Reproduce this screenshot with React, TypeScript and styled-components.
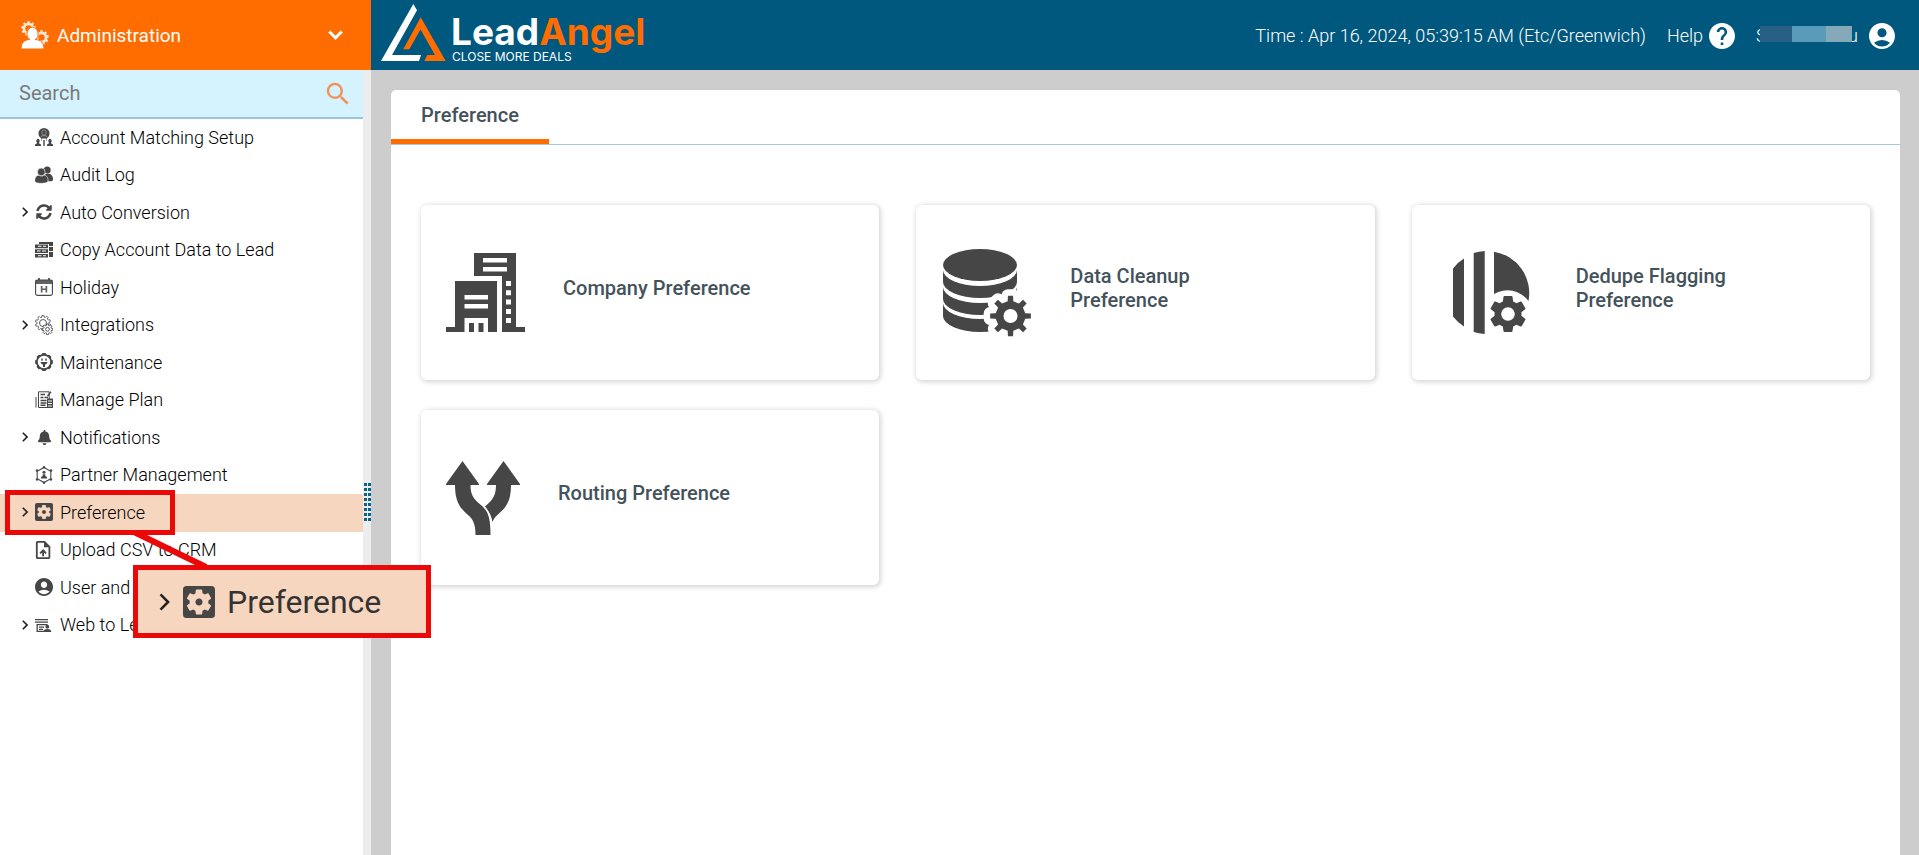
import React from "react";
import styled, { createGlobalStyle } from "styled-components";
import { FaBell, FaSyncAlt } from "react-icons/fa";
import {
  MdAccountCircle,
  MdHelp,
  MdOutlineUploadFile,
  MdSearch,
  MdSettings,
  MdSettingsApplications,
} from "react-icons/md";

const color = {
  orange: "#ff6c00",
  blue: "#00587e",
  peach: "#f6d6bf",
  red: "#ea0808",
  ink: "#464646",
  label: "#44525b",
};

const GlobalStyle = createGlobalStyle`
  *, *::before, *::after { box-sizing: border-box; }
  body { margin: 0; background: #cdcdcd; font-family: Roboto, "Liberation Sans", sans-serif; }
  a { color: inherit; text-decoration: none; }
  ul { margin: 0; padding: 0; list-style: none; }
  svg { display: block; flex: none; }
`;

const Page = styled.div`
  position: relative;
  display: grid;
  grid-template-columns: 371px 1fr;
  grid-template-rows: 70px 1fr;
  min-height: 100vh;
`;

/* Top bar */

const ModuleButton = styled.button`
  display: flex;
  align-items: center;
  gap: 8px;
  padding: 0 28px 0 21px;
  border: 0;
  background: ${color.orange};
  color: #fff;
  font: 400 19px Roboto, sans-serif;
`;

const ModuleName = styled.span`
  flex: 1;
  text-align: left;
`;

const TopBar = styled.header`
  display: flex;
  align-items: center;
  justify-content: space-between;
  padding: 0 20px 0 9px;
  background: ${color.blue};
  color: #fff;
  font-size: 18px;
`;

const Logo = styled.a`
  display: flex;
  align-items: center;
  gap: 5px;
  font-family: Inter, sans-serif;
`;

const LogoText = styled.span`
  display: grid;
  padding-top: 8px;
`;

const Brand = styled.span`
  font-size: 37px;
  font-weight: 700;
  line-height: 36px;
`;

const BrandAccent = styled.span`
  color: ${color.orange};
`;

const Tagline = styled.span`
  padding-left: 1px;
  font-size: 12px;
  line-height: 14px;
`;

const TopTools = styled.div`
  display: flex;
  align-items: center;
  gap: 21px;
  padding-top: 1px;
  font-weight: 300;
`;

const HelpLink = styled.a`
  display: flex;
  align-items: center;
  gap: 6px;
`;

const UserButton = styled.button`
  display: flex;
  align-items: center;
  gap: 11px;
  padding: 0 4px 0 0;
  border: 0;
  background: none;
  color: inherit;
  font: inherit;
`;

const UserName = styled.span`
  position: relative;
  display: flex;
  justify-content: space-between;
  width: 102px;
`;

const Redaction = styled.span`
  position: absolute;
  inset: 1px 6px auto 4px;
  display: grid;
  grid-template-columns: 32fr 33fr 26fr;
  height: 16px;
`;

const RedactionTile = styled.span<{ $tone: string }>`
  background: ${(p) => p.$tone};
`;

/* Sidebar */

const Sidebar = styled.aside`
  display: grid;
  grid-template-columns: 1fr 8px;
  background: #fff;
`;

const SearchBox = styled.label`
  display: flex;
  align-items: center;
  height: 49px;
  padding: 0 10px 0 19px;
  border-bottom: 2px solid #9bc6d8;
  background: #d5f3fe;
  color: #f3935a;
`;

const SearchInput = styled.input`
  flex: 1;
  min-width: 0;
  padding: 0 0 2px;
  border: 0;
  outline: 0;
  background: none;
  font: 400 20px Roboto, sans-serif;
  color: #333;
  &::placeholder {
    color: #7a7a7a;
    opacity: 1;
  }
`;

const Menu = styled.ul`
  display: grid;
  grid-auto-rows: 1fr;
  height: 525px;
`;

const MenuItem = styled.li<{ $active: boolean }>`
  background: ${(p) => (p.$active ? color.peach : "transparent")};
`;

const MenuLink = styled.a`
  display: grid;
  grid-template-columns: 13px 18px 1fr;
  align-items: center;
  height: 100%;
  padding: 0 0 1px 22px;
  color: #000;
  font-size: 18px;
  font-weight: 300;
`;

const MenuIcon = styled.span`
  display: grid;
  place-items: center;
  color: ${color.ink};
`;

const MenuText = styled.span`
  padding-left: 7px;
  white-space: nowrap;
`;

const Splitter = styled.div`
  display: grid;
  justify-content: center;
  padding-top: 413px;
  background: #ededed;
`;

const Grip = styled.div`
  display: grid;
  grid-template-columns: 3px 3px;
  grid-auto-rows: 3px;
  gap: 2px 1px;
  align-content: start;
`;

const GripDot = styled.span`
  background: #0a6489;
`;

/* Main area */

const Main = styled.main`
  display: flex;
  padding: 20px 19px 0 20px;
  background: #cdcdcd;
`;

const Panel = styled.section`
  flex: 1;
  border-radius: 5px 5px 0 0;
  background: #fff;
`;

const Tabs = styled.div`
  display: flex;
  border-bottom: 1px solid #a8c6d3;
`;

const Tab = styled.button`
  width: 158px;
  height: 54px;
  padding: 1px 0 0;
  border: 0;
  border-bottom: 5px solid ${color.orange};
  background: none;
  color: ${color.label};
  font: 500 20px Roboto, sans-serif;
`;

const Cards = styled.div`
  display: grid;
  grid-template-columns: repeat(3, 1fr);
  gap: 30px 37px;
  padding: 60px 30px;
`;

const Card = styled.a`
  display: flex;
  align-items: center;
  gap: 38px;
  height: 175px;
  padding: 0 25px;
  border-radius: 6px;
  box-shadow: 1px 1px 5px 1px rgba(0, 0, 0, 0.17);
  color: ${color.ink};
`;

const CardLabel = styled.span`
  max-width: 200px;
  padding-bottom: 9px;
  color: ${color.label};
  font-size: 20px;
  font-weight: 500;
  line-height: 24px;
`;

/* Annotation layer */

const Highlight = styled.div`
  position: absolute;
  left: 5px;
  top: 490px;
  width: 170px;
  height: 45px;
  border: 5px solid ${color.red};
`;

const Pointer = styled.svg`
  position: absolute;
  left: 130px;
  top: 530px;
`;

const Callout = styled.div`
  position: absolute;
  left: 133px;
  top: 565px;
  display: flex;
  align-items: center;
  width: 298px;
  height: 73px;
  padding-left: 21px;
  border: 5px solid ${color.red};
  background: ${color.peach};
  color: ${color.ink};
  font-size: 32px;
`;

const CalloutText = styled.span`
  padding-left: 12px;
  color: #333;
`;

const CalloutIcon = styled.span`
  padding-left: 13px;
`;

/* Drawings */

function gearPath(cx: number, cy: number, teeth: number, outer: number, inner: number, tip = 0.2, root = 0.3) {
  const step = (Math.PI * 2) / teeth;
  const points: string[] = [];
  for (let i = 0; i < teeth; i++) {
    const mid = i * step - Math.PI / 2;
    const corners: [number, number][] = [
      [-root, inner],
      [-tip, outer],
      [tip, outer],
      [root, inner],
    ];
    corners.forEach(([f, r]) => {
      const a = mid + f * step;
      points.push(`${(cx + r * Math.cos(a)).toFixed(2)} ${(cy + r * Math.sin(a)).toFixed(2)}`);
    });
  }
  return `M${points.join("L")}Z`;
}

const hole = (cx: number, cy: number, r: number) =>
  `M${cx - r} ${cy}a${r} ${r} 0 1 0 ${2 * r} 0a${r} ${r} 0 1 0 ${-2 * r} 0Z`;

const Small = ({ children, size = 18 }: { children: React.ReactNode; size?: number }) => (
  <svg width={size} height={size} viewBox="0 0 18 18" fill="currentColor" aria-hidden="true">
    {children}
  </svg>
);

const Chevron = ({ width = 6, height = 10, stroke = 1.6 }) => (
  <svg width={width} height={height} viewBox="0 0 6 10" fill="none" stroke="#222" strokeWidth={stroke} aria-hidden="true">
    <path d="M.8 .8L5 5 .8 9.200" />
  </svg>
);

const AdminIcon = () => (
  <svg width="28" height="28" viewBox="0 0 28 28" fill="#fff" aria-hidden="true">
    <path
      fillRule="evenodd"
      opacity=".85"
      d={gearPath(7.5, 7.5, 9, 7.4, 5.8, 0.22, 0.3) + hole(7.5, 7.5, 3.2)}
    />
    <path
      fillRule="evenodd"
      opacity=".85"
      d={gearPath(20.5, 16.5, 9, 7.4, 5.8, 0.22, 0.3) + hole(20.5, 16.5, 3.2)}
    />
    <g stroke={color.orange} strokeWidth="1">
      <path d="M0 28c0-6.500 3.500-9 8-9.500h7c4.500.5 8 3 8 9.500Z" />
      <ellipse cx="11.5" cy="13" rx="5.6" ry="6.800" />
    </g>
    <path d="M9 17h5v4H9z" />
  </svg>
);

const MatchIcon = () => (
  <Small>
    <circle cx="9" cy="5.500" r="5.500" />
    <path d="M6 9.500h6V13H6z" />
    <path d="M6.500 10.500h5V18h-5z" fill="#fff" />
    <path d="M8.300 12h1.400v6H8.300zM0 18v-1.500l1.800-1v-1.200a1.700 2 0 1 1 2.400 0v1.200l1.800 1V18zM12 18v-1.500l1.800-1v-1.200a1.700 2 0 1 1 2.400 0v1.200l1.800 1V18z" />
    <path d="M7 3.500c0-2 4-2 4 0v2c0 2-4 2-4 0zM5.500 9.500c.6-1.500 1.800-1.800 3.500-1.800s2.900.3 3.500 1.800" fill="none" stroke="#aaa" strokeWidth=".8" />
  </Small>
);

const PeopleIcon = () => (
  <Small>
    <circle cx="12.200" cy="4" r="3.500" />
    <path d="M9 15V9.500c1-1.200 2-1.700 4-1.700 3 0 5 1.700 5 6 0 1-1.500 1.500-4 1.500z" />
    <g stroke="#fff" strokeWidth=".6">
      <circle cx="6.300" cy="6" r="3.900" />
      <path d="M-.3 14.800c0-4 2.300-5.600 4.300-5.600 1.500 1.200 3.300 1.200 4.800 0 2.200 0 4.300 1.600 4.300 5.600 0 1.700-3 2.500-6.700 2.500S-.3 16.500-.3 14.800z" />
    </g>
  </Small>
);

const ServerIcon = () => (
  <Small>
    <path d="M4 1h14v15h-4V3H4zM0 3.500h13v3.700H0zM0 8.200h13v3.700H0zM0 12.900h13v3.700H0z" />
    <path d="M3 5.300h3.500M8 5.300h3M2 10h3.500M7 10h4M3 14.800h3.500M8 14.800h3M14 5.500h4M14 10.500h4" stroke="#fff" strokeWidth="1.100" />
  </Small>
);

const HolidayIcon = () => (
  <Small>
    <rect x=".6" y="2" width="16.800" height="15.400" rx="1.800" fill="none" stroke="currentColor" strokeWidth="1.100" />
    <path d="M.6 2h16.800v4H.6zM3 0h2v3H3zM13 0h2v3h-2zM5.800 8h1.700v2.400h3V8h1.700v6.500h-1.700v-2.600h-3v2.600H5.800z" opacity=".85" />
  </Small>
);

const IntegrationsIcon = () => (
  <svg width="18" height="20" viewBox="0 0 18 20" fill="none" stroke="currentColor" strokeWidth=".9" aria-hidden="true">
    <path d={gearPath(8, 8, 10, 7.6, 6, 0.22, 0.3)} strokeDasharray="3 .5" />
    <circle cx="8" cy="8" r="3.500" />
    <path d={gearPath(12.5, 14.3, 8, 5.4, 4.1, 0.22, 0.3)} fill="#fff" />
    <circle cx="12.500" cy="14.300" r="1.900" />
  </svg>
);

const MaintenanceIcon = () => (
  <Small>
    <path fillRule="evenodd" d={gearPath(9, 9, 8, 9, 8, 0.2, 0.38) + hole(9, 9, 6.2)} />
    <path d="M6.300 5.500h1.400v2.300H6.300zM10.300 5.500h1.400v2.300h-1.400zM5.500 9h7c-.3 1.500-1.200 2.300-2.500 2.500V14H8v-2.500C6.700 11.300 5.800 10.500 5.500 9z" />
  </Small>
);

const PlanIcon = () => (
  <Small>
    <path d="M3.500.8h10.700v15.700H3.500zM1 6v10.500" fill="none" stroke="currentColor" strokeWidth="1" />
    <path d="M5.500 3.500H10M5.500 6.500h3M9.500 6.500H13M5.500 9.500h6M5.500 12h6M5.500 14.200h5M12.500 5L16 .8" stroke="currentColor" strokeWidth="1.400" />
    <path d="M12 7.500h6V17h-6z" />
    <path d="M13 10h4M13 12.500h4M13 15h4" stroke="#fff" strokeWidth="1" />
  </Small>
);

const PartnerIcon = () => (
  <Small>
    <path d="M9 1.500l6.800 3.800v7.400L9 16.500l-6.800-3.800V5.300z" fill="none" stroke="currentColor" strokeWidth="1.100" />
    <circle cx="9" cy="1.300" r="1.200" />
    <circle cx="9" cy="16.700" r="1.200" />
    <circle cx="2" cy="4.500" r="1.200" />
    <circle cx="16" cy="4.500" r="1.200" />
    <circle cx="2" cy="13.500" r="1.200" />
    <circle cx="16" cy="13.500" r="1.200" />
    <circle cx="9" cy="6.200" r="1.500" />
    <path d="M6 12.500V11l1.700-1V8.300h2.600V10l1.700 1v1.500z" />
  </Small>
);

const WebLeadIcon = () => (
  <Small>
    <path d="M0 3h13v1.200H0zM0 5.500h13v1.200H0zM1.500 8h11v1.300h-11zM1.500 8h1.300v8H1.500zM4 10.500h5v1.200H4zM4 12.800h4V14H4zM1.500 14.800H9V16H1.500z" />
    <circle cx="12.300" cy="10.700" r="1.900" />
    <path d="M8.500 16c0-2 1.500-3 3.800-3s4 1 4 3z" />
  </Small>
);

const LogoMark = () => (
  <svg width="66" height="70" viewBox="10 0 66 70" aria-hidden="true">
    <path fill="#fff" d="M43.300 4L47 10.300 22 55h29l-2 6H11z" />
    <path fill={color.orange} d="M50.700 17.300L75.700 61H54.300l3-6H65L50.500 29.500 39.300 49.300h-6z" />
  </svg>
);

const CompanyIcon = () => (
  <svg width="79" height="79" viewBox="0 0 79 79" fill="currentColor" fillRule="evenodd" aria-hidden="true">
    <path d="M28 0h42v74h9v5H56V23H28zM37 5v4.500h24V5zM37 14v4.500h24V14zM60 28v5h5v-5zM60 37.300v5h5v-5zM60 46.600v5h5v-5zM60 56v5h5v-5zM60 65v5h5v-5z" />
    <path d="M9 28h42v51h-9V65H18.500v14H0v-5h9zM18.500 42v4.500H42V42zM18.500 51v4.500H42V51zM23 70h5v9h-5zM32.500 70h5v9h-5z" />
  </svg>
);

const dataGear = gearPath(67.5, 67, 8, 20.5, 15, 0.16, 0.24);

const DataIcon = () => (
  <svg width="91" height="88" viewBox="-2 0 91 88" fill="currentColor" fillRule="evenodd" aria-hidden="true">
    <ellipse cx="37" cy="16" rx="37" ry="16" />
    <path d="M0 21a37 16 0 0 0 74 0v12a37 16 0 0 1-74 0zM0 38a37 16 0 0 0 74 0v12a37 16 0 0 1-74 0zM0 54a37 16 0 0 0 74 0v13a37 16 0 0 1-74 0z" />
    <path d={dataGear} fill="#fff" stroke="#fff" strokeWidth="13" strokeLinejoin="round" />
    <path d={dataGear + hole(67.5, 67, 7)} />
  </svg>
);

const DedupeIcon = () => (
  <svg width="101" height="84" viewBox="-16 0 101 84" fill="currentColor" aria-hidden="true">
    <path d="M0 17.500Q5 11 11 7.500v68Q5 72 0 65.500zM20.700 2q5-1.500 11-2v83q-6-.3-11-2zM41 .7A42 42 0 0 1 75.500 50 26 26 0 0 0 41 43z" />
    <MdSettings x="32.500" y="40.500" size={45} />
  </svg>
);

const RoutingIcon = () => (
  <svg width="74" height="74" viewBox="0 0 74 74" fill="currentColor" aria-hidden="true">
    <path d="M16.500 0L33 23v1h-8.500c0 9 2.500 14 11 20.500 7 6 9 13 9 29.500h-15c0-11-2.500-16-7.500-20C13 46.500 9 39 9 24H0v-1z" />
    <path d="M57.500 0L74 23v1h-9c0 13-3 21-11 27.500-4 3.500-6 5.500-7.500 9.500-1-6-3.500-11-7.500-15.500C47 39 50 34 50 24h-9v-1z" />
  </svg>
);

/* Content */

const menu: { text: string; icon: React.ReactNode; opens?: boolean; active?: boolean }[] = [
  { text: "Account Matching Setup", icon: <MatchIcon /> },
  { text: "Audit Log", icon: <PeopleIcon /> },
  { text: "Auto Conversion", icon: <FaSyncAlt size={16} />, opens: true },
  { text: "Copy Account Data to Lead", icon: <ServerIcon /> },
  { text: "Holiday", icon: <HolidayIcon /> },
  { text: "Integrations", icon: <IntegrationsIcon />, opens: true },
  { text: "Maintenance", icon: <MaintenanceIcon /> },
  { text: "Manage Plan", icon: <PlanIcon /> },
  { text: "Notifications", icon: <FaBell size={15} />, opens: true },
  { text: "Partner Management", icon: <PartnerIcon /> },
  { text: "Preference", icon: <MdSettingsApplications viewBox="3 3 18 18" size={18} />, opens: true, active: true },
  { text: "Upload CSV to CRM", icon: <MdOutlineUploadFile viewBox="3 2 20 20" size={18} /> },
  { text: "User and", icon: <MdAccountCircle viewBox="2 2 20 20" size={18} /> },
  { text: "Web to Lead", icon: <WebLeadIcon />, opens: true },
];

const cards = [
  { label: "Company Preference", icon: <CompanyIcon /> },
  { label: "Data Cleanup Preference", icon: <DataIcon /> },
  { label: "Dedupe Flagging Preference", icon: <DedupeIcon /> },
  { label: "Routing Preference", icon: <RoutingIcon /> },
];

export default function App() {
  return (
    <Page>
      <GlobalStyle />
      <ModuleButton type="button">
        <AdminIcon />
        <ModuleName>Administration</ModuleName>
        <svg width="15" height="10" viewBox="0 0 15 10" fill="none" stroke="#fff" strokeWidth="3" aria-hidden="true">
          <path d="M1.200 1.500l6.300 6.300 6.300-6.300" />
        </svg>
      </ModuleButton>
      <TopBar>
        <Logo href="#home">
          <LogoMark />
          <LogoText>
            <Brand>
              Lead<BrandAccent>Angel</BrandAccent>
            </Brand>
            <Tagline>CLOSE MORE DEALS</Tagline>
          </LogoText>
        </Logo>
        <TopTools>
          <span>Time : Apr 16, 2024, 05:39:15 AM (Etc/Greenwich)</span>
          <HelpLink href="#help">
            Help
            <MdHelp viewBox="2 2 20 20" size={26} />
          </HelpLink>
          <UserButton type="button" aria-label="Account">
            <UserName>
              <span>S</span>
              <span>u</span>
              <Redaction>
                <RedactionTile $tone="#286085" />
                <RedactionTile $tone="#5a9bba" />
                <RedactionTile $tone="#84a9b8" />
              </Redaction>
            </UserName>
            <MdAccountCircle viewBox="2 2 20 20" size={26} />
          </UserButton>
        </TopTools>
      </TopBar>
      <Sidebar>
        <nav aria-label="Administration">
          <SearchBox>
            <SearchInput type="text" placeholder="Search" aria-label="Search" />
            <MdSearch size={30} />
          </SearchBox>
          <Menu>
            {menu.map((item) => (
              <MenuItem key={item.text} $active={!!item.active}>
                <MenuLink href="#menu">
                  <span>{item.opens && <Chevron />}</span>
                  <MenuIcon>{item.icon}</MenuIcon>
                  <MenuText>{item.text}</MenuText>
                </MenuLink>
              </MenuItem>
            ))}
          </Menu>
        </nav>
        <Splitter>
          <Grip>
            {Array.from({ length: 16 }, (_, i) => (
              <GripDot key={i} />
            ))}
          </Grip>
        </Splitter>
      </Sidebar>
      <Main>
        <Panel>
          <Tabs role="tablist">
            <Tab type="button" role="tab" aria-selected="true">
              Preference
            </Tab>
          </Tabs>
          <Cards>
            {cards.map((card) => (
              <Card key={card.label} href="#preference">
                {card.icon}
                <CardLabel>{card.label}</CardLabel>
              </Card>
            ))}
          </Cards>
        </Panel>
      </Main>
      <Highlight />
      <Pointer width="80" height="40" viewBox="0 0 80 40" aria-hidden="true">
        <path d="M4 2l72 35" stroke={color.red} strokeWidth="6" />
      </Pointer>
      <Callout>
        <Chevron width={11} height={18} stroke={1.4} />
        <CalloutIcon>
          <MdSettingsApplications viewBox="3 3 18 18" size={32} />
        </CalloutIcon>
        <CalloutText>Preference</CalloutText>
      </Callout>
    </Page>
  );
}
